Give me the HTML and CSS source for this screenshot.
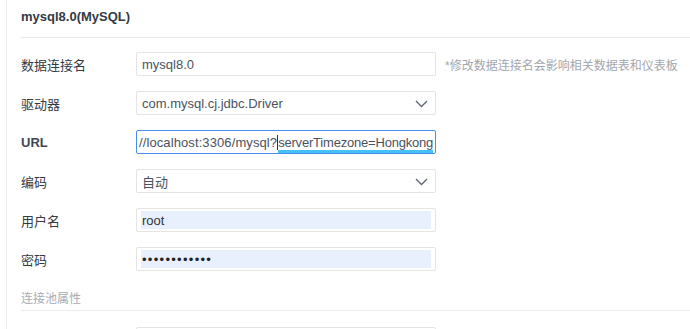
FILE: index.html
```html
<!DOCTYPE html>
<html lang="zh-CN">
<head>
  <meta charset="UTF-8">
  <title>mysql8.0(MySQL)</title>
  <link rel="stylesheet" href="styles.css">
</head>
<body>

  <div class="panel">
    <div class="panel-title">mysql8.0(MySQL)</div>

    <div class="form">
      <div class="row">
        <label>数据连接名</label>
        <div class="field">mysql8.0</div>
        <span class="hint">*修改数据连接名会影响相关数据表和仪表板</span>
      </div>

      <div class="row">
        <label>驱动器</label>
        <div class="field select">
          com.mysql.cj.jdbc.Driver
          <svg class="chevron" width="13" height="8" viewBox="0 0 13 8"><path d="M1 1l5.5 5.5L12 1" fill="none" stroke="#5b6472" stroke-width="1.3"/></svg>
        </div>
      </div>

      <div class="row">
        <label class="latin">URL</label>
        <div class="field focus">
          <span class="url-text">//localhost:3306/mysql?<span class="caret"></span><span class="marked">serverTimezone=Hongkong</span></span>
        </div>
      </div>

      <div class="row">
        <label>编码</label>
        <div class="field select">
          自动
          <svg class="chevron" width="13" height="8" viewBox="0 0 13 8"><path d="M1 1l5.5 5.5L12 1" fill="none" stroke="#5b6472" stroke-width="1.3"/></svg>
        </div>
      </div>

      <div class="row">
        <label>用户名</label>
        <div class="field autofill"><span class="fill">root</span></div>
      </div>

      <div class="row">
        <label>密码</label>
        <div class="field autofill"><span class="fill dots">••••••••••••</span></div>
      </div>
    </div>

    <div class="section">连接池属性</div>

    <div class="row">
      <label></label>
      <div class="field"></div>
    </div>
  </div>

</body>
</html>
```

FILE: styles.css
```css
body {
  margin: 0;
  background: #ffffff;
  font-family: "Liberation Sans", "Noto Sans CJK SC", sans-serif;
  font-size: 13px;
  color: #333a44;
  overflow: hidden;
}
.panel {
  margin-left: 6px;
  border-left: 1px solid #ebebeb;
  padding-left: 14px;
  height: 329px;
  overflow: hidden;
}
.panel-title {
  height: 37px;
  line-height: 33px;
  font-weight: bold;
  font-size: 13px;
  color: #333a44;
  border-bottom: 1px solid #e9e9e9;
}
.form {
  padding-top: 14px;
}
.row {
  display: flex;
  align-items: center;
  height: 24px;
  margin-bottom: 15px;
}
.row label {
  width: 115px;
  flex-shrink: 0;
  color: #333a44;
}
.row label.latin {
  font-weight: bold;
  color: #3f4652;
}
.field {
  position: relative;
  box-sizing: border-box;
  width: 300px;
  height: 24px;
  border: 1px solid #e4e4e4;
  border-radius: 2px;
  padding: 0 5px;
  display: flex;
  align-items: center;
  color: #4a525e;
  white-space: nowrap;
  overflow: hidden;
}
.select .chevron {
  position: absolute;
  right: 7px;
  top: 8px;
}
.focus {
  border-color: #4a8fe7;
  padding: 0 2px;
}
.url-text {
  letter-spacing: 0.1px;
  position: relative;
}
.caret {
  display: inline-block;
  width: 1px;
  height: 15px;
  background: #333;
  vertical-align: -3px;
}
.marked {
  letter-spacing: -0.2px;
  border-bottom: 3px solid #46c1f8;
}
.autofill {
  padding: 2px 4px;
  align-items: stretch;
}
.fill {
  flex: 1;
  background: #e8f0fd;
  padding-left: 1px;
  display: flex;
  align-items: center;
  color: #333;
}
.dots {
  font-size: 13px;
  letter-spacing: 1.3px;
  color: #222;
}
.hint {
  margin-left: 9px;
  font-size: 12px;
  color: #a3a7ad;
}
.section {
  height: 29px;
  line-height: 20px;
  margin-top: -4px;
  box-sizing: border-box;
  padding-top: 7px;
  font-size: 12px;
  color: #a8acb2;
  border-bottom: 1px solid #ebebeb;
  margin-bottom: 16px;
}
```
